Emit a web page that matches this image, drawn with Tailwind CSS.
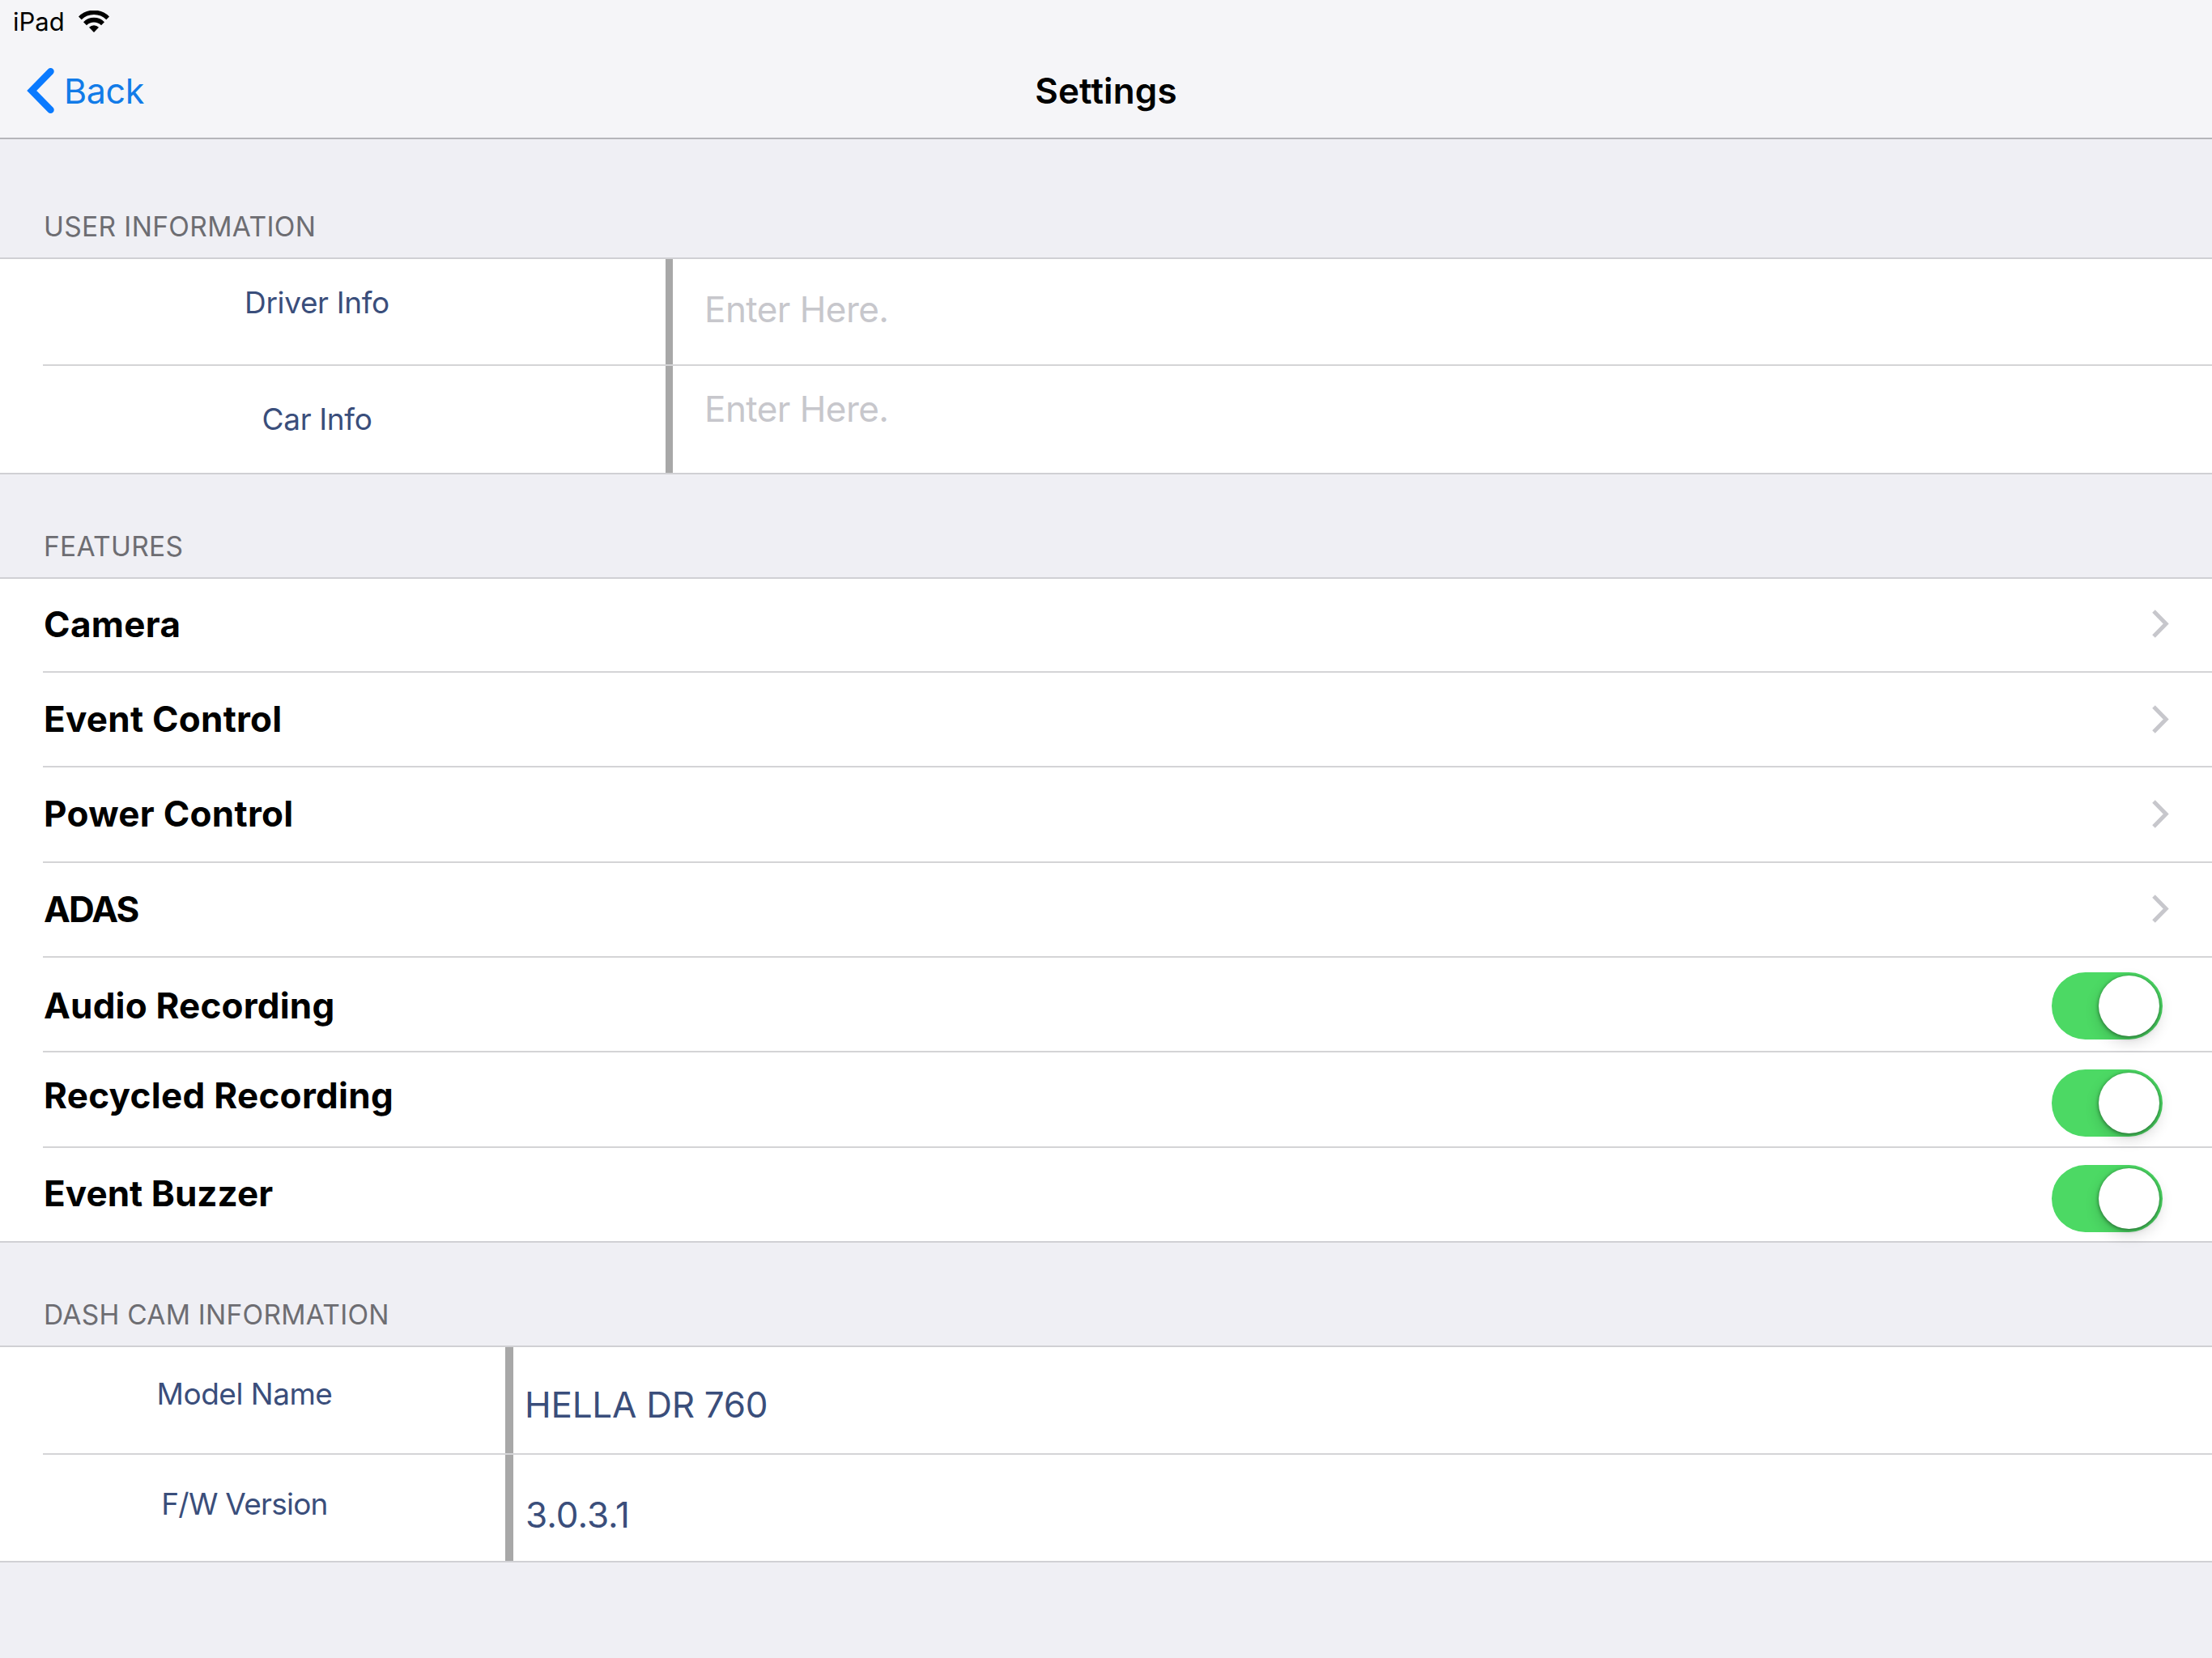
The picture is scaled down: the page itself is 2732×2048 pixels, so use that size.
<!DOCTYPE html>
<html lang="en">
<head>
    <meta charset="UTF-8">
    <meta name="viewport" content="width=device-width, initial-scale=1.0">
    <title>Settings</title>
    <script src="https://cdn.jsdelivr.net/npm/@tailwindcss/browser@4"></script>
</head>
<body class="bg-[#efeff4] font-['Inter','Liberation_Sans',sans-serif] text-black min-h-screen overflow-hidden">

    <!-- Status bar + navigation bar -->
    <header class="bg-[#f5f5f8] border-b-2 border-[#b5b5ba]">
        <div class="h-[54px] pl-4 pb-0.5 flex items-center gap-[17px]">
            <span class="text-[31px] leading-none">iPad</span>
            <svg class="w-[38px] h-[27px]" viewBox="0 0 38 27" fill="none">
                <path d="M1.8 9.4A24.4 24.4 0 0 1 36.2 9.4" stroke="#000" stroke-width="5.4"/>
                <path d="M8 16.2A15.5 15.5 0 0 1 30 16.2" stroke="#000" stroke-width="5.6"/>
                <path d="M19 27L13 20.8A8.4 8.4 0 0 1 25 20.8Z" fill="#000"/>
            </svg>
        </div>
        <nav class="h-[116px] grid grid-cols-3 items-center">
            <a href="#" class="pl-[33px] flex items-center gap-3">
                <svg class="w-[34px] h-14" viewBox="0 0 34 56" fill="none">
                    <path d="M29.5 4.3L6.2 28L29.5 51.7" stroke="#0a7aff" stroke-width="8.5" stroke-linecap="round"/>
                </svg>
                <span class="text-[43px] leading-none tracking-[-0.4px] text-[#127be8]">Back</span>
            </a>
            <h1 class="pb-px text-[44px] leading-none font-semibold tracking-[0.15px] text-center">Settings</h1>
        </nav>
    </header>

    <main>
        <!-- User information -->
        <h2 class="h-[146px] pl-[54px] pb-[18px] flex items-end text-[33.5px] leading-[40px] tracking-[0.35px] text-[#6d6d72]">USER INFORMATION</h2>
        <section class="bg-white border-y-2 border-[#d0d0d4]">
            <div class="ml-[53px] h-[132px] border-b-2 border-[#d4d4d6] flex">
                <div class="w-[769px] pr-[92px] pb-[23px] flex items-center justify-center text-[37px] tracking-[-0.35px] text-[#3a4e7b]">Driver Info</div>
                <div class="w-[9px] bg-[#a8a8a8]"></div>
                <div class="flex-1 pl-[39px] pb-1.5 flex items-center text-[44px] tracking-[-0.55px] text-[#c7c7cc]">Enter Here.</div>
            </div>
            <div class="ml-[53px] h-[132px] flex">
                <div class="w-[769px] pr-[92px] flex items-center justify-center text-[37px] tracking-[-0.35px] text-[#3a4e7b]">Car Info</div>
                <div class="w-[9px] bg-[#a8a8a8]"></div>
                <div class="flex-1 pl-[39px] pb-[27px] flex items-center text-[44px] tracking-[-0.55px] text-[#c7c7cc]">Enter Here.</div>
            </div>
        </section>

        <!-- Features -->
        <h2 class="h-[127px] pl-[54px] pb-[18px] flex items-end text-[33.5px] leading-[40px] tracking-[0.3px] text-[#6d6d72]">FEATURES</h2>
        <section class="bg-white border-y-2 border-[#d0d0d4] text-[44px] font-bold">
            <div class="ml-[53px] pl-px pr-[53px] pb-[3px] h-[116px] border-b-2 border-[#d4d4d6] flex items-center justify-between">
                <span class="tracking-[0.35px]">Camera</span>
                <svg class="w-[21px] h-[35px]" viewBox="0 0 21 35" fill="none"><path d="M2 2L17.2 17.5L2 33" stroke="#c7c7cc" stroke-width="5"/></svg>
            </div>
            <div class="ml-[53px] pl-px pr-[53px] pb-px h-[117px] border-b-2 border-[#d4d4d6] flex items-center justify-between">
                <span class="tracking-[0.25px]">Event Control</span>
                <svg class="w-[21px] h-[35px]" viewBox="0 0 21 35" fill="none"><path d="M2 2L17.2 17.5L2 33" stroke="#c7c7cc" stroke-width="5"/></svg>
            </div>
            <div class="ml-[53px] pl-px pr-[53px] pb-0.5 h-[118px] border-b-2 border-[#d4d4d6] flex items-center justify-between">
                <span class="tracking-[0.3px]">Power Control</span>
                <svg class="w-[21px] h-[35px]" viewBox="0 0 21 35" fill="none"><path d="M2 2L17.2 17.5L2 33" stroke="#c7c7cc" stroke-width="5"/></svg>
            </div>
            <div class="ml-[53px] pl-px pr-[53px] pb-0.5 h-[117px] border-b-2 border-[#d4d4d6] flex items-center justify-between">
                <span class="tracking-[-1.8px]">ADAS</span>
                <svg class="w-[21px] h-[35px]" viewBox="0 0 21 35" fill="none"><path d="M2 2L17.2 17.5L2 33" stroke="#c7c7cc" stroke-width="5"/></svg>
            </div>
            <div class="ml-[53px] pl-px pr-[61px] h-[117px] border-b-2 border-[#d4d4d6] flex items-center justify-between">
                <span class="tracking-[0.2px] pt-0.5">Audio Recording</span>
                <button class="w-[137px] h-[83px] mt-1 px-1 rounded-full bg-[#4cd964] flex items-center justify-end">
                    <span class="size-[75px] rounded-full bg-white shadow-[0_7px_18px_rgba(0,0,0,0.16),0_2px_5px_rgba(0,0,0,0.3),0_0_4px_rgba(0,0,0,0.2)]"></span>
                </button>
            </div>
            <div class="ml-[53px] pl-px pr-[61px] h-[118px] border-b-2 border-[#d4d4d6] flex items-center justify-between">
                <span class="tracking-[0.3px] pb-[10px]">Recycled Recording</span>
                <button class="w-[137px] h-[83px] mt-[9px] px-1 rounded-full bg-[#4cd964] flex items-center justify-end">
                    <span class="size-[75px] rounded-full bg-white shadow-[0_7px_18px_rgba(0,0,0,0.16),0_2px_5px_rgba(0,0,0,0.3),0_0_4px_rgba(0,0,0,0.2)]"></span>
                </button>
            </div>
            <div class="ml-[53px] pl-px pr-[61px] h-[115px] flex items-center justify-between">
                <span class="tracking-[0.05px] pb-1">Event Buzzer</span>
                <button class="w-[137px] h-[83px] mt-[9px] px-1 rounded-full bg-[#4cd964] flex items-center justify-end">
                    <span class="size-[75px] rounded-full bg-white shadow-[0_7px_18px_rgba(0,0,0,0.16),0_2px_5px_rgba(0,0,0,0.3),0_0_4px_rgba(0,0,0,0.2)]"></span>
                </button>
            </div>
        </section>

        <!-- Dash cam information -->
        <h2 class="h-[127px] pl-[54px] pb-[18px] flex items-end text-[33.5px] leading-[40px] tracking-[0.25px] text-[#6d6d72]">DASH CAM INFORMATION</h2>
        <section class="bg-white border-y-2 border-[#d0d0d4] text-[#3a4e7b]">
            <div class="ml-[53px] h-[133px] border-b-2 border-[#d4d4d6] flex">
                <div class="w-[571px] pr-[73px] pb-4 flex items-center justify-center text-[37px] tracking-[-0.5px]">Model Name</div>
                <div class="w-[10px] bg-[#a8a8a8]"></div>
                <div class="flex-1 pl-[14px] pt-[10px] flex items-center text-[44px] tracking-[-0.25px]">HELLA DR 760</div>
            </div>
            <div class="ml-[53px] h-[131px] flex">
                <div class="w-[571px] pr-[73px] pb-[10px] flex items-center justify-center text-[37px] tracking-[-0.75px]">F/W Version</div>
                <div class="w-[10px] bg-[#a8a8a8]"></div>
                <div class="flex-1 pl-[15px] pt-4 flex items-center text-[44px]">3.0.3.1</div>
            </div>
        </section>
    </main>
</body>
</html>
